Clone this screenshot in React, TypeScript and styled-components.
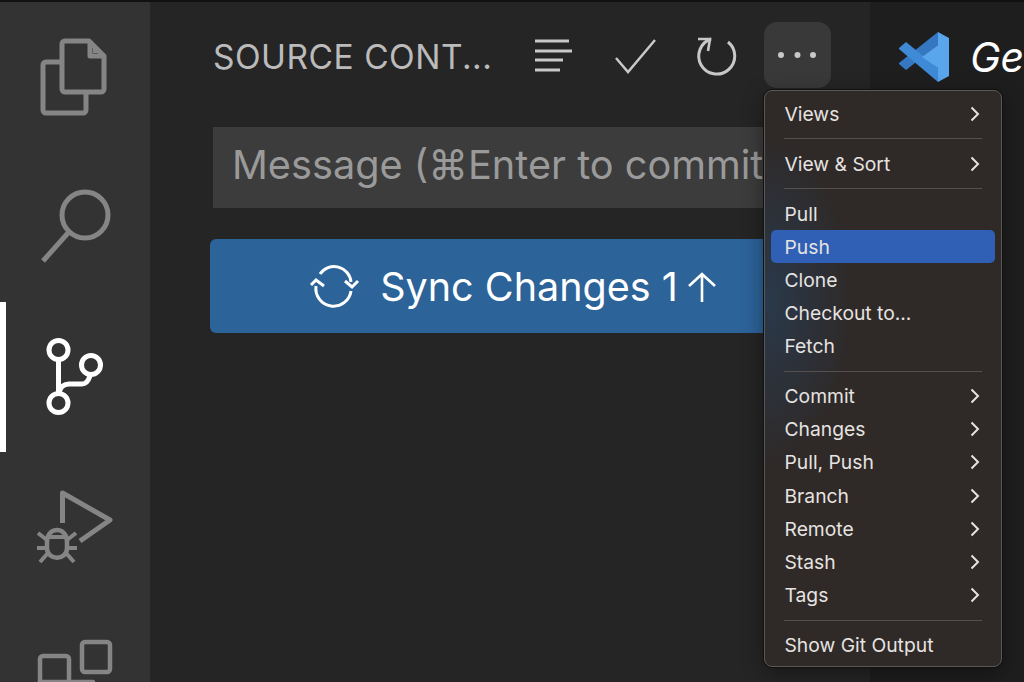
import React from "react";
import styled, { createGlobalStyle } from "styled-components";

const Global = createGlobalStyle`
  html, body { margin: 0; padding: 0; background: #252526; }
  body { font-family: Inter, "Liberation Sans", sans-serif; }
  #root { width: 1024px; height: 682px; overflow: hidden; }
`;

const Window = styled.div`
  position: relative;
  width: 1024px;
  height: 682px;
  overflow: hidden;
  display: flex;
  flex-direction: column;
`;
const TopEdge = styled.div`
  height: 2px;
  flex: none;
  background: #111;
`;
const Body = styled.div`
  flex: 1;
  min-height: 0;
  display: flex;
`;
const ActivityBar = styled.nav`
  width: 150px;
  flex: none;
  background: #333333;
  display: flex;
  flex-direction: column;
  overflow: hidden;
`;
const ActivityItem = styled.div<{ $active?: boolean }>`
  height: 150px;
  flex: none;
  display: flex;
  align-items: center;
  justify-content: center;
  box-sizing: border-box;
  color: ${(p) => (p.$active ? "#ffffff" : "#858585")};
  box-shadow: ${(p) => (p.$active ? "inset 6px 0 0 #ffffff" : "none")};
`;
const ActivityIcon = styled.svg`
  width: 150px;
  height: 150px;
  fill: none;
  stroke: currentColor;
  stroke-width: 5;
  stroke-linejoin: round;
`;
const Sidebar = styled.aside`
  width: 720px;
  flex: none;
  background: #252526;
  display: flex;
  flex-direction: column;
  box-sizing: border-box;
  padding: 20px 50px 0 60px;
`;
const SidebarHeader = styled.header`
  height: 66px;
  display: flex;
  align-items: center;
  padding-left: 3px;
`;
const SidebarTitle = styled.h2`
  margin: 0;
  padding-top: 4px;
  width: 292px;
  flex: none;
  font-size: 33.5px;
  letter-spacing: 0.5px;
  font-weight: 400;
  color: #bbbbbb;
  white-space: nowrap;
`;
const ToolButton = styled.div<{ $hover?: boolean }>`
  width: 67px;
  height: 66px;
  flex: none;
  margin-left: ${(p) => (p.$hover ? "16px" : "14px")};
  border-radius: 13px;
  display: flex;
  align-items: center;
  justify-content: center;
  color: #c8c8c8;
  background: ${(p) => (p.$hover ? "#39393a" : "transparent")};
`;
const ToolIcon = styled.svg`
  width: 67px;
  height: 66px;
  fill: none;
  stroke: currentColor;
  stroke-width: 3;
`;
const MessageBox = styled.div`
  margin: 39px 0 0 3px;
  height: 81px;
  box-sizing: border-box;
  background: #3c3c3c;
  display: flex;
  align-items: center;
  padding: 0 0 6px 19px;
  font-size: 39.7px;
  color: #9a9a9a;
  white-space: nowrap;
  overflow: hidden;
`;
const SyncButton = styled.div`
  margin-top: 31px;
  height: 94px;
  box-sizing: border-box;
  padding: 2px 5px 0 0;
  border-radius: 6px;
  background: #2c6399;
  color: #ffffff;
  display: flex;
  align-items: center;
  justify-content: center;
  gap: 20px;
  font-size: 39.5px;
  white-space: nowrap;
`;
const SyncLabel = styled.span`
  display: inline-flex;
  align-items: center;
  gap: 9px;
`;
const SyncIcon = styled.svg`
  width: 52px;
  height: 52px;
  margin-top: -6px;
  fill: none;
  stroke: #ffffff;
  stroke-width: 3;
`;
const ArrowIcon = styled.svg`
  width: 30px;
  height: 36px;
  fill: none;
  stroke: #ffffff;
  stroke-width: 2.6;
`;
const Editor = styled.main`
  flex: 1;
  background: #1e1e1e;
`;
const Tab = styled.div`
  height: 110px;
  box-sizing: border-box;
  padding: 29px 0 0 28px;
  display: flex;
  gap: 20px;
  overflow: hidden;
  white-space: nowrap;
`;
const TabLogo = styled.svg`
  width: 52px;
  height: 52px;
  flex: none;
`;
const TabTitle = styled.span`
  font-size: 41px;
  font-style: italic;
  font-weight: 400;
  line-height: 52px;
  color: #ffffff;
`;
const Menu = styled.div`
  position: absolute;
  left: 764px;
  top: 90px;
  width: 238px;
  height: 577px;
  box-sizing: border-box;
  padding: 6.4px 6px 0;
  border: 1px solid #5c5855;
  border-radius: 8px;
  background:
    radial-gradient(90px 170px at 0 210px, rgba(38, 68, 100, 0.6), transparent),
    #2f2927;
  box-shadow: 0 0 0 1px #111, 0 6px 22px rgba(0, 0, 0, 0.4);
`;
const MenuRow = styled.div<{ $active?: boolean }>`
  height: 33.2px;
  box-sizing: border-box;
  padding: 0 15px 0 13.5px;
  display: flex;
  align-items: center;
  justify-content: space-between;
  border-radius: 5px;
  font-size: 19.3px;
  color: #e6e3e1;
  background: ${(p) => (p.$active ? "#2f60b5" : "transparent")};
`;
const Chevron = styled.svg`
  width: 10px;
  height: 16px;
  fill: none;
  stroke: #e6e3e1;
  stroke-width: 2;
`;
const Separator = styled.hr`
  margin: 7.8px 13px;
  height: 1px;
  border: 0;
  background: #55504e;
`;

type Entry = { label: string; sub?: boolean; active?: boolean } | "sep";
const entries: Entry[] = [
  { label: "Views", sub: true },
  "sep",
  { label: "View & Sort", sub: true },
  "sep",
  { label: "Pull" },
  { label: "Push", active: true },
  { label: "Clone" },
  { label: "Checkout to..." },
  { label: "Fetch" },
  "sep",
  { label: "Commit", sub: true },
  { label: "Changes", sub: true },
  { label: "Pull, Push", sub: true },
  { label: "Branch", sub: true },
  { label: "Remote", sub: true },
  { label: "Stash", sub: true },
  { label: "Tags", sub: true },
  "sep",
  { label: "Show Git Output" },
];

export default function App() {
  return (
    <Window>
      <Global />
      <TopEdge />
      <Body>
        <ActivityBar>
          <ActivityItem>
            <ActivityIcon viewBox="0 0 150 150">
              <path d="M65 39h24l15 15v33a3 3 0 0 1-3 3H65a3 3 0 0 1-3-3V42a3 3 0 0 1 3-3z" />
              <path d="M90 39v15h14" />
              <path d="M93 44l7 7h-7z" fill="currentColor" stroke="none" />
              <path d="M62 60H46a3 3 0 0 0-3 3v45a3 3 0 0 0 3 3h37a3 3 0 0 0 3-3V90" />
            </ActivityIcon>
          </ActivityItem>
          <ActivityItem>
            <ActivityIcon viewBox="0 0 150 150">
              <circle cx="85" cy="63" r="23" />
              <path d="M68 81L43 109" />
            </ActivityIcon>
          </ActivityItem>
          <ActivityItem $active>
            <ActivityIcon viewBox="0 0 150 150">
              <circle cx="58.5" cy="48" r="9.5" />
              <circle cx="91" cy="63" r="9.5" />
              <circle cx="58.5" cy="101" r="9.5" />
              <path d="M58.5 58v33" />
              <path d="M59 91c1-6 5-9 10-9h13c3 0 6-2 8-8" />
            </ActivityIcon>
          </ActivityItem>
          <ActivityItem>
            <ActivityIcon viewBox="0 0 150 150">
              <path d="M62.5 71V41L110 68 80 89" />
              <path d="M47 90c0-16 20-16 20 0v6c0 13-20 13-20 0z" strokeWidth="4.5" />
              <path d="M47 85h20" strokeWidth="4" />
              <path d="M38 81l9 7M76 81l-9 7M37 96h10M77 96H67M40 110l8-9M74 110l-8-9" strokeWidth="4" />
            </ActivityIcon>
          </ActivityItem>
          <ActivityItem>
            <ActivityIcon viewBox="0 0 150 150">
              <rect x="82" y="40" width="28" height="30" rx="3" strokeWidth="4.5" />
              <rect x="40" y="54" width="29" height="32" rx="3" strokeWidth="4.5" />
              <rect x="40" y="80" width="29" height="30" strokeWidth="4.5" />
              <rect x="69" y="80" width="24" height="30" strokeWidth="4.5" />
            </ActivityIcon>
          </ActivityItem>
        </ActivityBar>
        <Sidebar>
          <SidebarHeader>
            <SidebarTitle>SOURCE CONT...</SidebarTitle>
            <ToolButton>
              <ToolIcon viewBox="0 0 67 66">
                <path d="M16 19h34M16 29h37M16 38h28M16 48h25" />
              </ToolIcon>
            </ToolButton>
            <ToolButton>
              <ToolIcon viewBox="0 0 67 66">
                <path d="M16 36l12 14L55 18" strokeWidth="2.5" />
              </ToolIcon>
            </ToolButton>
            <ToolButton>
              <ToolIcon viewBox="0 0 67 66">
                <path d="M30 17a18 18 0 1 0 17 3" />
                <path d="M17 17h12l-2 12" strokeWidth="2.6" />
              </ToolIcon>
            </ToolButton>
            <ToolButton $hover>
              <ToolIcon viewBox="0 0 67 66">
                <circle cx="17" cy="33" r="3" fill="currentColor" stroke="none" />
                <circle cx="33.5" cy="33" r="3" fill="currentColor" stroke="none" />
                <circle cx="49" cy="33" r="3" fill="currentColor" stroke="none" />
              </ToolIcon>
            </ToolButton>
          </SidebarHeader>
          <MessageBox>Message (⌘Enter to commit</MessageBox>
          <SyncButton>
            <SyncIcon viewBox="0 0 52 52">
              <path d="M12 16A17 17 0 0 1 43 24" />
              <path d="M37 23l7 6 6-6" />
              <path d="M43 33A17 17 0 0 1 8 28" />
              <path d="M3 27l5-5 8 6" />
            </SyncIcon>
            <SyncLabel>
              Sync Changes 1
              <ArrowIcon viewBox="0 0 30 36">
                <path d="M15 33V5M2 17L15 5l13 12" />
              </ArrowIcon>
            </SyncLabel>
          </SyncButton>
        </Sidebar>
        <Editor>
          <Tab>
            <TabLogo viewBox="0 0 52 52">
              <path d="M40 1L40 14 8 39 1 33V32z" fill="#3577c0" />
              <path d="M1 18V17L8 11 40 37V51z" fill="#3f8ad6" />
              <path d="M40 1L51 7V45L40 51V37L24 26 40 14z" fill="#5aa6ec" />
            </TabLogo>
            <TabTitle>Get Started</TabTitle>
          </Tab>
        </Editor>
      </Body>
      <Menu>
        {entries.map((e, i) =>
          e === "sep" ? (
            <Separator key={i} />
          ) : (
            <MenuRow key={i} $active={e.active}>
              {e.label}
              {e.sub && (
                <Chevron viewBox="0 0 10 16">
                  <path d="M1.5 1.5L8 8l-6.5 6.5" />
                </Chevron>
              )}
            </MenuRow>
          )
        )}
      </Menu>
    </Window>
  );
}
